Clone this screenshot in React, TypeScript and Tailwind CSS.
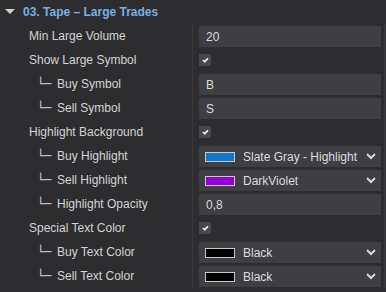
import React from 'react';

type Row =
  | { label: string; child?: boolean; kind: 'text'; value: string }
  | { label: string; child?: boolean; kind: 'check' }
  | { label: string; child?: boolean; kind: 'color'; swatch: string; value: string };

const rows: Row[] = [
  { label: 'Min Large Volume', kind: 'text', value: '20' },
  { label: 'Show Large Symbol', kind: 'check' },
  { label: 'Buy Symbol', child: true, kind: 'text', value: 'B' },
  { label: 'Sell Symbol', child: true, kind: 'text', value: 'S' },
  { label: 'Highlight Background', kind: 'check' },
  { label: 'Buy Highlight', child: true, kind: 'color', swatch: '#0f78c8', value: 'Slate Gray - Highlight' },
  { label: 'Sell Highlight', child: true, kind: 'color', swatch: '#9400d3', value: 'DarkViolet' },
  { label: 'Highlight Opacity', child: true, kind: 'text', value: '0,8' },
  { label: 'Special Text Color', kind: 'check' },
  { label: 'Buy Text Color', child: true, kind: 'color', swatch: '#000000', value: 'Black' },
  { label: 'Sell Text Color', child: true, kind: 'color', swatch: '#000000', value: 'Black' },
];

function Check() {
  return (
    <div className="w-[12px] h-[12px] bg-[#47474c] flex items-center justify-center">
      <svg width="7" height="6" viewBox="0 0 7 6">
        <path d="M1 3 L2.8 4.7 L6 1.2" fill="none" stroke="#f2f2f2" strokeWidth="1.7" />
      </svg>
    </div>
  );
}

function Chevron() {
  return (
    <svg width="10" height="7" viewBox="0 0 10 7" className="absolute right-[5px] top-[7px]">
      <path d="M1 1 L5 5 L9 1" fill="none" stroke="#d8d8d8" strokeWidth="2" />
    </svg>
  );
}

export default function App() {
  return (
    <div className="w-[386px] h-[292px] bg-[#2d2d30] text-[12px] text-[#d4d4d4] overflow-hidden" style={{ fontFamily: '"Liberation Sans", Arial, sans-serif' }}>
      <div className="h-[23px] flex items-center">
        <svg width="10" height="5" viewBox="0 0 10 5" className="ml-[5px]">
          <path d="M0 0 L10 0 L5 5 Z" fill="#d0d0d0" />
        </svg>
        <span className="ml-[8px] font-bold text-[#79b0e3]">03. Tape – Large Trades</span>
      </div>
      <div className="flex w-[385px] border-r border-[#3a3a3d]">
        <div className="w-[192px] pt-[1px]">
          {rows.map((r) => (
            <div key={r.label} className={`h-[24px] flex items-center ${r.child ? 'pl-[37px]' : 'pl-[29px]'}`}>
              {r.child && <span className="w-[20px]" style={{ fontFamily: '"DejaVu Sans", sans-serif' }}>└─</span>}
              {r.label}
            </div>
          ))}
        </div>
        <div className="w-px bg-[#3a3a3d]" />
        <div className="flex-1 pl-[6px] pr-[3px] pt-[1px]">
          {rows.map((r) => (
            <div key={r.label} className="h-[24px] pt-[2px]">
              {r.kind === 'check' && <div className="pt-[4px]"><Check /></div>}
              {r.kind === 'text' && (
                <div className="h-[21px] bg-[#3e3e43] flex items-center pl-[7px] text-[#dcdcdc]">{r.value}</div>
              )}
              {r.kind === 'color' && (
                <div className="relative h-[21px] bg-[#3e3e43] flex items-center pl-[6px] text-[#dcdcdc]">
                  <div className="w-[30px] h-[10px] border border-[#c8c8c8]" style={{ backgroundColor: r.swatch }} />
                  <span className="ml-[8px]">{r.value}</span>
                  <Chevron />
                </div>
              )}
            </div>
          ))}
        </div>
      </div>
    </div>
  );
}
